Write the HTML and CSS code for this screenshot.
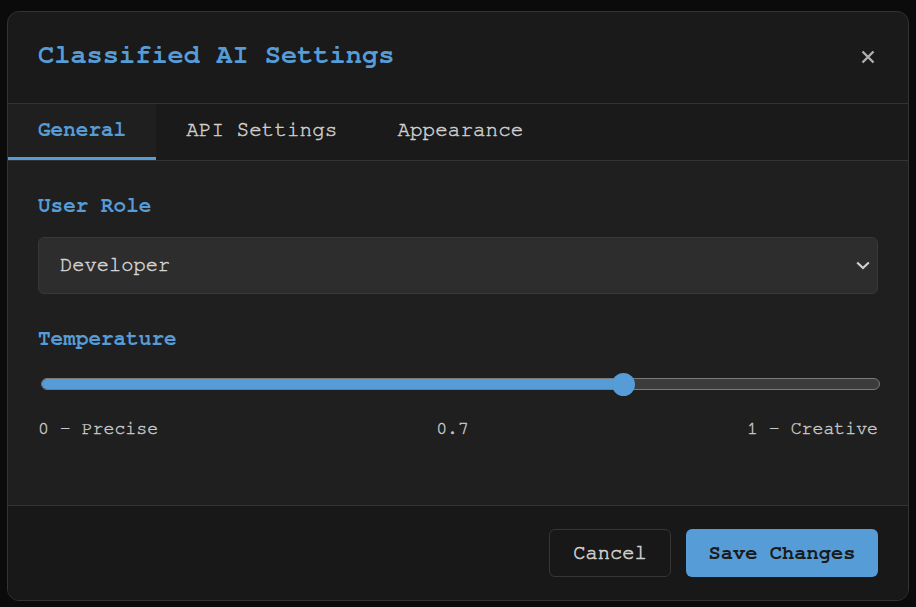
FILE: index.html
```html
<!DOCTYPE html>
<html lang="en">
<head>
<meta charset="utf-8">
<title>Classified AI Settings</title>
<link rel="stylesheet" href="styles.css">
</head>
<body>
<div class="dialog">
  <header class="dialog-header">
    <h1 class="dialog-title">Classified AI Settings</h1>
    <button class="close-btn" aria-label="Close">
      <svg width="14" height="14" viewBox="0 0 14 14"><path d="M1.5 1.5 L12.5 12.5 M12.5 1.5 L1.5 12.5" stroke="#b0b0b0" stroke-width="2.4" stroke-linecap="butt" fill="none"/></svg>
    </button>
  </header>
  <nav class="tabs">
    <button class="tab active">General</button>
    <button class="tab">API Settings</button>
    <button class="tab">Appearance</button>
  </nav>
  <section class="dialog-body">
    <label class="field-label">User Role</label>
    <div class="select">
      <span class="select-value">Developer</span>
      <svg class="chevron" width="14" height="9" viewBox="0 0 14 9"><path d="M1.2 1.5 L7 7 L12.8 1.5" stroke="#d0d0d0" stroke-width="2.2" fill="none"/></svg>
    </div>
    <label class="field-label temp-label">Temperature</label>
    <div class="slider">
      <div class="track">
        <div class="fill"></div>
        <div class="thumb"></div>
      </div>
    </div>
    <div class="range-labels">
      <span>0 - Precise</span>
      <span>0.7</span>
      <span>1 - Creative</span>
    </div>
  </section>
  <footer class="dialog-footer">
    <button class="btn btn-cancel">Cancel</button>
    <button class="btn btn-save">Save Changes</button>
  </footer>
</div>
</body>
</html>
```

FILE: styles.css
```css
* { box-sizing: border-box; }

html, body {
  margin: 0;
  background: #0b0b0b;
}

body {
  padding: 11px 7px;
  font-family: "FreeMono", "Liberation Mono", monospace;
}

.dialog {
  width: 902px;
  height: 590px;
  border: 1px solid #333333;
  border-radius: 12px;
  overflow: hidden;
  background: #1a1a1a;
  display: flex;
  flex-direction: column;
}

.dialog-header {
  height: 92px;
  flex: none;
  display: flex;
  align-items: center;
  justify-content: space-between;
  padding: 0 29px 6px 30px;
  border-bottom: 1px solid #333333;
}

.dialog-title {
  margin: 0;
  font-size: 27px;
  font-weight: bold;
  color: #569cd6;
  line-height: 31px;
}

.close-btn {
  background: none;
  border: none;
  padding: 4px;
  margin-top: 4px;
  display: flex;
  cursor: pointer;
}

.tabs {
  height: 57px;
  flex: none;
  display: flex;
  border-bottom: 1px solid #333333;
}

.tab {
  background: none;
  border: none;
  border-bottom: 3px solid transparent;
  padding: 0 30px 2px;
  font-family: inherit;
  font-size: 21px;
  color: #d0d0d0;
  -webkit-text-stroke: 0.45px #d0d0d0;
  cursor: pointer;
}

.tab.active {
  background: #1f1f1f;
  color: #569cd6;
  font-weight: bold;
  -webkit-text-stroke: 0;
  border-bottom-color: #569cd6;
}

.dialog-body {
  flex: 1;
  background: #1f1f1f;
  padding: 33px 30px 0;
  display: flex;
  flex-direction: column;
}

.field-label {
  font-size: 21px;
  line-height: 24px;
  font-weight: bold;
  color: #569cd6;
}

.select {
  margin-top: 19px;
  height: 57px;
  background: #2d2d2d;
  border: 1px solid #383838;
  border-radius: 6px;
  display: flex;
  align-items: center;
  justify-content: space-between;
  padding: 0 7px 2px 21px;
}

.select-value {
  font-size: 20.4px;
  color: #d4d4d4;
  -webkit-text-stroke: 0.45px #d4d4d4;
}

.chevron {
  margin-top: 2px;
}

.temp-label {
  margin-top: 33px;
}

.slider {
  margin: 21px -2px 0 3px;
  height: 24px;
  display: flex;
  align-items: center;
}

.track {
  position: relative;
  width: 100%;
  height: 12px;
  background: #3c3c3c;
  border: 1px solid #7a7a7a;
  border-radius: 6px;
}

.fill {
  height: 100%;
  width: calc(11.5px + 0.7 * (100% - 23px));
  background: #569cd6;
  border-radius: 5px 0 0 5px;
}

.thumb {
  position: absolute;
  top: 50%;
  left: calc(11.5px + 0.7 * (100% - 23px));
  width: 23px;
  height: 23px;
  margin: -11.5px 0 0 -11.5px;
  border-radius: 50%;
  background: #569cd6;
}

.range-labels {
  margin-top: 22px;
  display: flex;
  justify-content: space-between;
  font-size: 18.2px;
  line-height: 21px;
  color: #c8c8c8;
  -webkit-text-stroke: 0.4px #c8c8c8;
}

.dialog-footer {
  height: 95px;
  flex: none;
  border-top: 1px solid #333333;
  background: #181818;
  display: flex;
  align-items: center;
  justify-content: flex-end;
  gap: 15px;
  padding: 0 30px;
}

.btn {
  height: 48px;
  padding: 0;
  border-radius: 6px;
  font-family: inherit;
  font-size: 20.4px;
  white-space: nowrap;
  text-align: center;
  cursor: pointer;
}

.btn-cancel {
  background: transparent;
  border: 1px solid #363636;
  color: #cfcfcf;
  font-weight: normal;
  -webkit-text-stroke: 0.6px #cfcfcf;
  width: 122px;
}

.btn-save {
  background: #569cd6;
  border: none;
  color: #1a1a1a;
  font-weight: bold;
  width: 192px;
}
```
